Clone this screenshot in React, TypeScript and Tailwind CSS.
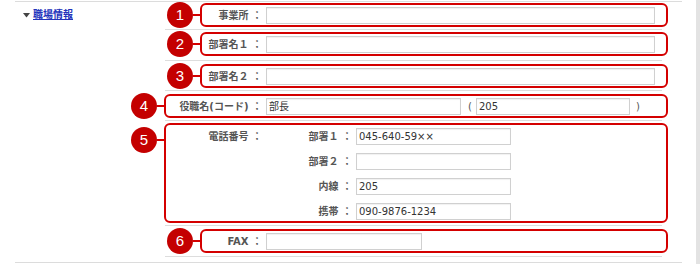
import React from 'react';

const font = { fontFamily: '"DejaVu Sans", "Noto Sans CJK JP", sans-serif' };

function Badge({ n, top }: { n: string; top: string }) {
  return (
    <div className={`absolute right-full ${top} flex items-center`}>
      <div className="w-[26px] h-[26px] rounded-full bg-[#c40000] text-white flex items-center justify-center text-[15px] font-['Liberation_Sans',sans-serif]">
        {n}
      </div>
      <div className="w-[9px] h-[2px] bg-[#d40000]" />
    </div>
  );
}

function Field({ value, w }: { value?: string; w: string }) {
  return (
    <div className={`${w} h-[17px] border border-[#d0d0d0] bg-white pl-[2px] text-[10px] leading-[15px] text-[#333] shadow-[inset_0_1px_1px_rgba(0,0,0,0.06)]`}>
      {value}
    </div>
  );
}

function Sep() {
  return <div className="w-[497px] h-px bg-[#dddddd]" />;
}

export default function App() {
  const phones = [
    { label: '部署１ ：', value: '045-640-59××' },
    { label: '部署２ ：', value: '' },
    { label: '内線 ：', value: '205' },
    { label: '携帯 ：', value: '090-9876-1234' },
  ];
  const label = 'text-[10px] font-bold text-[#555] text-right whitespace-nowrap';
  const box = 'relative border-2 border-[#d40000] rounded-[6px] flex items-center';

  return (
    <div className="w-[700px] h-[264px] bg-white flex" style={font}>
      <div className="ml-[15px] mt-[1px] w-[667px] h-[262px] border-t border-b border-[#dcdcdc] flex">
        <div className="w-[150px] pt-[6px] pl-[8px]">
          <div className="flex items-center gap-[3px] h-[14px]">
            <svg width="7" height="5" viewBox="0 0 7 5">
              <polygon points="0,0 7,0 3.5,4.5" fill="#444" />
            </svg>
            <a className="text-[10px] font-bold text-[#2233bb] underline leading-[14px]">職場情報</a>
          </div>
        </div>

        <div className="w-[517px] flex flex-col">
          <div className="h-[27px] pt-[1px]">
            <div className={`${box} ml-[35px] w-[468px] h-[24px]`}>
              <Badge n="1" top="top-[-3px]" />
              <div className={`${label} w-[60px]`}>事業所 ：</div>
              <div className="ml-[4px]"><Field w="w-[389px]" /></div>
            </div>
          </div>
          <Sep />

          <div className="h-[30px] pt-[2px]">
            <div className={`${box} ml-[35px] w-[468px] h-[24px]`}>
              <Badge n="2" top="top-[-3px]" />
              <div className={`${label} w-[60px]`}>部署名１ ：</div>
              <div className="ml-[4px]"><Field w="w-[389px]" /></div>
            </div>
          </div>
          <Sep />

          <div className="h-[29px] pt-[3px]">
            <div className={`${box} ml-[35px] w-[468px] h-[24px]`}>
              <Badge n="3" top="top-[-3px]" />
              <div className={`${label} w-[60px]`}>部署名２ ：</div>
              <div className="ml-[4px]"><Field w="w-[389px]" /></div>
            </div>
          </div>
          <Sep />

          <div className="h-[29px] pt-[3px]">
            <div className={`${box} -ml-px w-[504px] h-[24px]`}>
              <Badge n="4" top="top-[-3px]" />
              <div className={`${label} w-[96px]`}>役職名(コード) ：</div>
              <div className="ml-[4px]"><Field w="w-[195px]" value="部長" /></div>
              <span className="ml-[7px] text-[10px] text-[#555]">(</span>
              <div className="ml-[4px]"><Field w="w-[154px]" value="205" /></div>
              <span className="ml-[6px] text-[10px] text-[#555]">)</span>
            </div>
          </div>
          <Sep />

          <div className="h-[104px] pt-[2px]">
            <div className="relative border-2 border-[#d40000] rounded-[6px] -ml-px w-[504px] h-[100px] flex items-start pt-[3px]">
              <Badge n="5" top="top-[2px]" />
              <div className={`${label} w-[96px] leading-[17px]`}>電話番号 ：</div>
              <div className="ml-[4px] flex flex-col gap-[8px]">
                {phones.map((p) => (
                  <div key={p.label} className="flex items-center">
                    <div className={`${label} w-[86px] leading-[17px]`}>{p.label}</div>
                    <div className="ml-[4px]"><Field w="w-[155px]" value={p.value} /></div>
                  </div>
                ))}
              </div>
            </div>
          </div>
          <Sep />

          <div className="h-[30px] pt-[3px]">
            <div className={`${box} ml-[35px] w-[468px] h-[24px]`}>
              <Badge n="6" top="top-[-3px]" />
              <div className={`${label} w-[60px]`}>FAX ：</div>
              <div className="ml-[4px]"><Field w="w-[156px]" /></div>
            </div>
          </div>
          <Sep />
        </div>
      </div>
      <div className="ml-auto w-[4px] h-full bg-[#e3e3e3]" />
    </div>
  );
}
